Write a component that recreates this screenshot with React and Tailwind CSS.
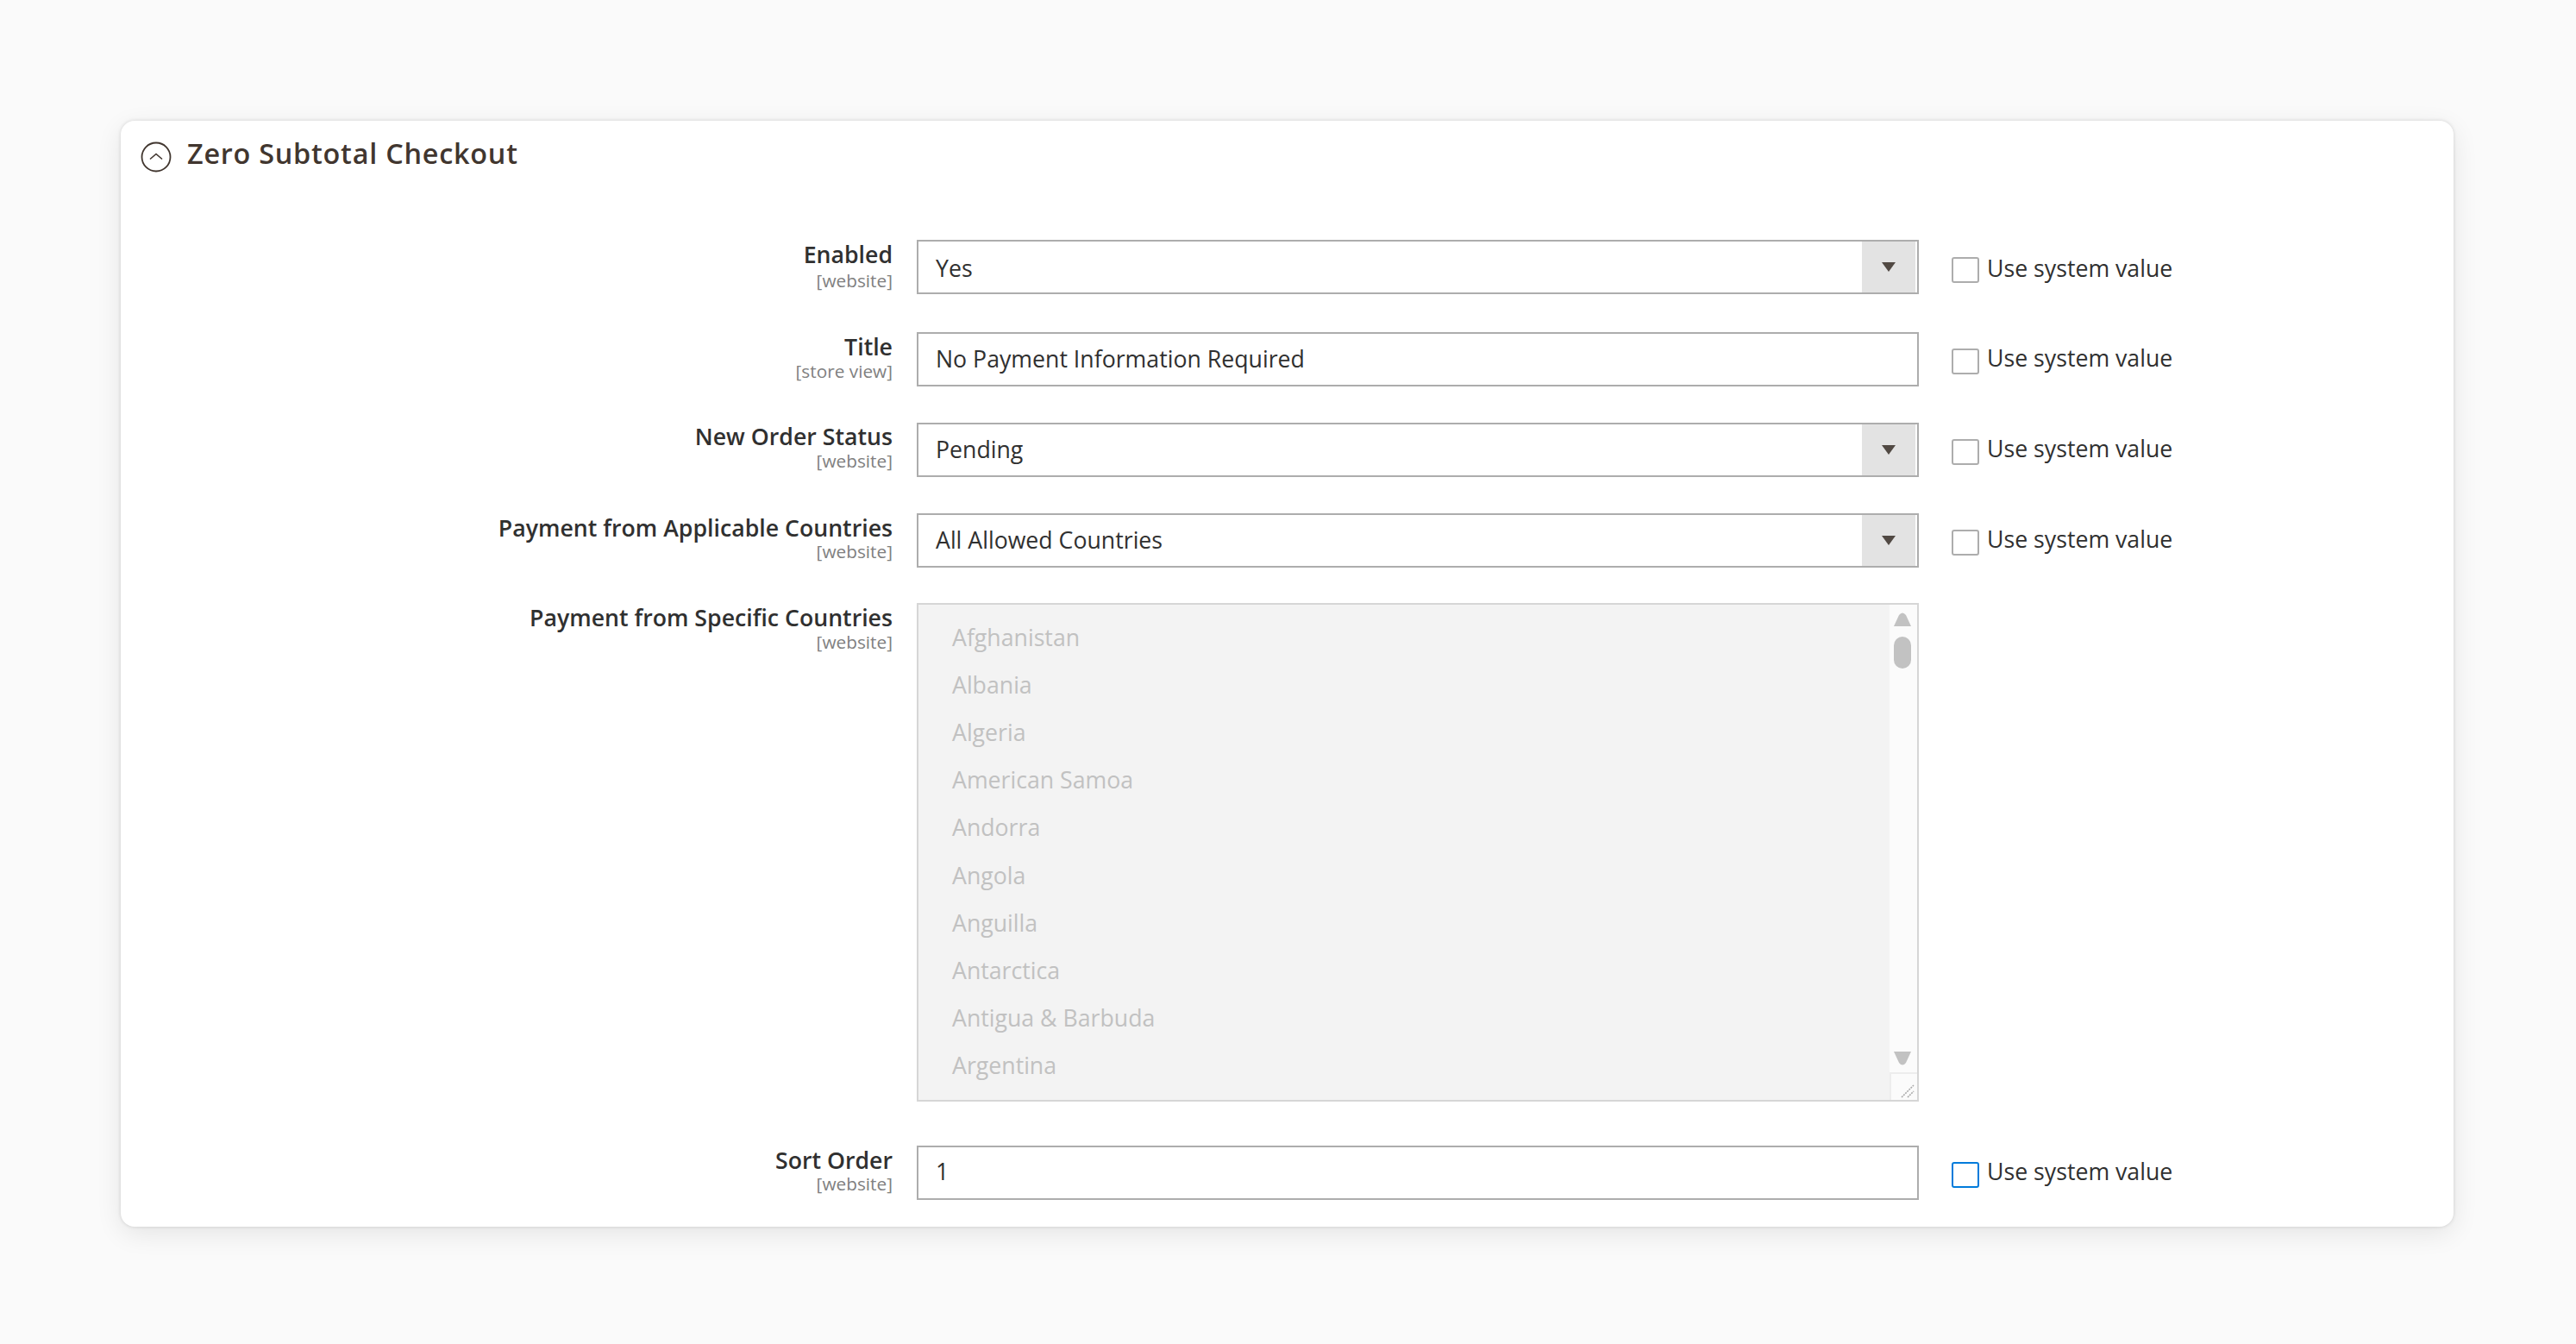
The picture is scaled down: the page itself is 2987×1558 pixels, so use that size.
const FONT = "font-['Open_Sans',sans-serif]";

function Label({ title, scope, titleClass = "", scopeClass = "mt-[-1px]" }) {
  return (
    <div className="w-[895px] shrink-0 text-right">
      <div className={`text-[26.7px] leading-[34px] font-semibold text-[#303030] ${titleClass}`}>{title}</div>
      <div className={`text-[20.8px] leading-[24px] text-[#808080] ${scopeClass}`}>[{scope}]</div>
    </div>
  );
}

function SystemValue({ focused, boxClass = "mt-[19px]", textClass = "mt-[13px]" }) {
  return (
    <div className="flex items-start ml-[38px] h-[63px]">
      <span className={`w-[32px] h-[30px] rounded-[3px] border-2 bg-white ${boxClass} ${focused ? "border-[#007bdb]" : "border-[#adadad]"}`} />
      <span className={`ml-[9px] text-[26.7px] leading-[34px] text-[#303030] ${textClass}`}>Use system value</span>
    </div>
  );
}

function SelectField({ value, textClass = "" }) {
  return (
    <div className="w-[1162px] h-[63px] shrink-0 flex border-2 border-[#adadad] bg-white">
      <div className={`flex-1 pl-[20px] flex items-center text-[26.7px] text-[#303030] ${textClass}`}>{value}</div>
      <div className="w-[62px] mr-[2px] bg-[#e3e3e3] flex items-center justify-center">
        <svg width="16" height="12" viewBox="0 0 16 12" className="mt-[1px]"><path d="M0 0H16L8 11Z" fill="#514943" /></svg>
      </div>
    </div>
  );
}

function InputField({ value, textClass = "" }) {
  return (
    <div className={`w-[1162px] h-[63px] shrink-0 flex items-center border-2 border-[#adadad] bg-white pl-[20px] text-[26.7px] text-[#303030] ${textClass}`}>
      {value}
    </div>
  );
}

const countries = ["Afghanistan", "Albania", "Algeria", "American Samoa", "Andorra", "Angola", "Anguilla", "Antarctica", "Antigua & Barbuda", "Argentina"];

function CountryList() {
  return (
    <div className="w-[1162px] h-[578px] shrink-0 flex border-2 border-[#d6d6d6] bg-[#f3f3f3]">
      <div className="flex-1 pl-[39px] pt-[10px] overflow-hidden">
        {countries.map((c) => (
          <div key={c} className="h-[55.2px] flex items-center text-[26.7px] text-[#c1c1c1]">{c}</div>
        ))}
      </div>
      <div className="w-[32px] bg-[#fbfbfb] flex flex-col">
        <div className="pl-[5px] pt-[9px]">
          <svg width="20" height="16" viewBox="0 0 20 16" className="block"><path d="M0 16 L6 3 Q10 -2 14 3 L20 16Z" fill="#c2c2c2" /></svg>
        </div>
        <div className="ml-[5px] mt-[12px] w-[20px] h-[37px] rounded-[10px] bg-[#c2c2c2]" />
        <div className="flex-1" />
        <div className="pl-[5px] pb-[8px]">
          <svg width="20" height="16" viewBox="0 0 20 16" className="block"><path d="M0 0 L6 13 Q10 18 14 13 L20 0Z" fill="#c2c2c2" /></svg>
        </div>
        <div className="h-[32px] border-t-2 border-l-2 border-[#ededed] bg-[#fbfbfb] flex items-end justify-end">
          <svg width="18" height="18" viewBox="0 0 18 18" className="block mr-[2px] mb-[1px]">
            <path d="M2 16L16 2M9 16L16 9" stroke="#aaaaaa" strokeWidth="1.6" strokeDasharray="2 1" />
          </svg>
        </div>
      </div>
    </div>
  );
}

function Row({ label, scope, children, check, focused, className = "", titleClass, scopeClass, boxClass, textClass }) {
  return (
    <div className={`flex items-start ${className}`}>
      <Label title={label} scope={scope} titleClass={titleClass} scopeClass={scopeClass} />
      <div className="ml-[28px]">{children}</div>
      {check && <SystemValue focused={focused} boxClass={boxClass} textClass={textClass} />}
    </div>
  );
}

export default function App() {
  return (
    <div className={`${FONT} min-h-screen bg-[#fafafa] pt-[140px] pl-[140px]`}>
      <div className="w-[2705px] h-[1282px] bg-white rounded-[16px] shadow-[0_0_4px_rgba(0,0,0,0.14),0_8px_30px_rgba(0,0,0,0.09)]">
        <div className="flex items-center pt-[20px] pl-[23px] h-[60px]">
          <svg width="36" height="36" viewBox="0 0 36 36" className="shrink-0 mt-[3px]">
            <circle cx="18" cy="18" r="16.5" fill="none" stroke="#41362f" strokeWidth="1.8" />
            <path d="M11 20.5L18 14.5L25 20.5" fill="none" stroke="#41362f" strokeWidth="1.6" />
          </svg>
          <h2 className="ml-[18px] mt-[-7px] text-[32.4px] leading-[40px] font-semibold tracking-[0.75px] text-[#41362f]">Zero Subtotal Checkout</h2>
        </div>
        <div className="pt-[78px]">
          <Row label="Enabled" scope="website" check scopeClass="mt-[1px]" boxClass="mt-[20px]" textClass="mt-[16px]"><SelectField value="Yes" textClass="pt-[3px]" /></Row>
          <Row label="Title" scope="store view" check className="mt-[44px]"><InputField value="No Payment Information Required" textClass="pb-[1px]" /></Row>
          <Row label="New Order Status" scope="website" check className="mt-[42px]" titleClass="mt-[-1px]"><SelectField value="Pending" /></Row>
          <Row label="Payment from Applicable Countries" scope="website" check className="mt-[42px]" scopeClass="mt-[-2px]"><SelectField value="All Allowed Countries" textClass="pb-[1px]" /></Row>
          <Row label="Payment from Specific Countries" scope="website" className="mt-[41px]"><CountryList /></Row>
          <Row label="Sort Order" scope="website" check focused className="mt-[51px]" scopeClass="mt-[-2px]"><InputField value="1" textClass="pb-[2px]" /></Row>
        </div>
      </div>
    </div>
  );
}
